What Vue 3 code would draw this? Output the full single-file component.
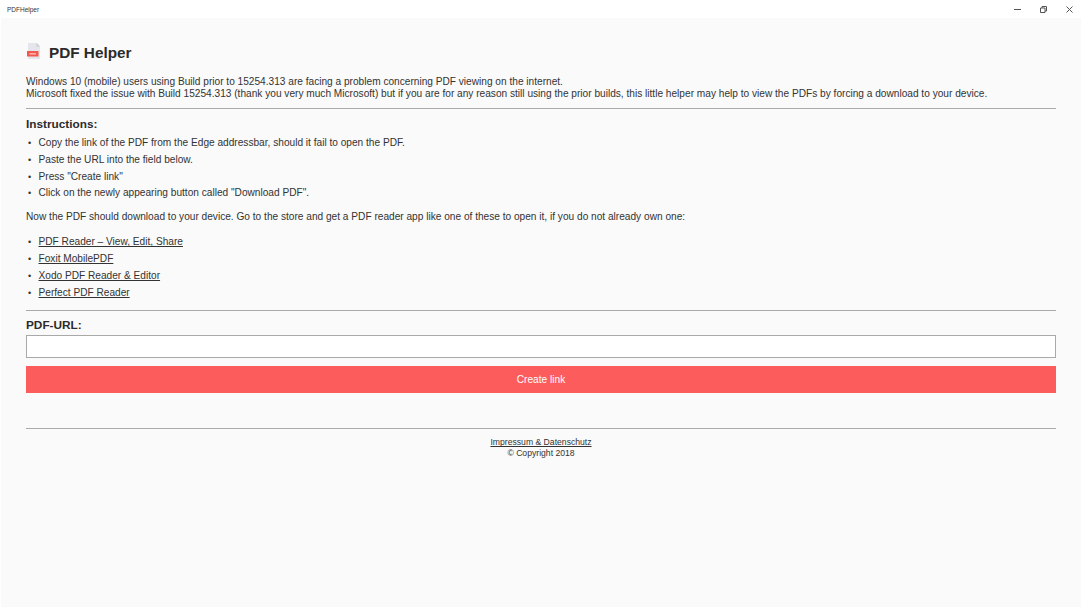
<template>
  <div class="app">
    <header class="titlebar">
      <span class="titlebar__name">PDFHelper</span>
      <div class="titlebar__controls">
        <svg width="7" height="7" viewBox="0 0 7 7"><path d="M0 3.500h7" stroke="#555" fill="none" /></svg>
        <svg width="7" height="7" viewBox="0 0 7 7"><path d="M.5 2h4.500v4.500h-4.500zM2 2v-1.500h4.500v4.500h-1.500" stroke="#555" fill="none" /></svg>
        <svg width="7" height="7" viewBox="0 0 7 7"><path d="M.5.5l6 6M6.500.5l-6 6" stroke="#555" fill="none" /></svg>
      </div>
    </header>

    <main class="page">
      <div class="heading">
        <svg class="heading__icon" width="16" height="16" viewBox="0 0 16 16">
          <path d="M2 0h8.500l3.500 3.500V16H2z" fill="#e4e6eb" />
          <path d="M10.500 0L14 3.500h-3.500z" fill="#c8cbd2" />
          <rect x="1" y="8" width="11.500" height="5.500" fill="#f4574b" />
          <rect x="3.500" y="10.200" width="6.500" height="1.300" fill="#fbc9c4" />
        </svg>
        <h1 class="heading__title">PDF Helper</h1>
      </div>

      <p class="intro">
        Windows 10 (mobile) users using Build prior to 15254.313 are facing a problem concerning PDF viewing on the internet.<br />
        Microsoft fixed the issue with Build 15254.313 (thank you very much Microsoft) but if you are for any reason still using the prior builds, this little helper may help to view the PDFs by forcing a download to your device.
      </p>

      <hr class="rule rule--first" />

      <h2 class="subtitle">Instructions:</h2>
      <ul class="list list--steps">
        <li v-for="step in steps" :key="step">{{ step }}</li>
      </ul>

      <p class="after">Now the PDF should download to your device. Go to the store and get a PDF reader app like one of these to open it, if you do not already own one:</p>

      <ul class="list">
        <li v-for="app in apps" :key="app"><a href="#" class="link">{{ app }}</a></li>
      </ul>

      <hr class="rule rule--second" />

      <label class="field">
        <span class="subtitle subtitle--url">PDF-URL:</span>
        <input class="field__input" type="text" />
      </label>
      <button class="create" type="button">Create link</button>

      <hr class="rule rule--third" />

      <footer class="footer">
        <a href="#" class="link">Impressum &amp; Datenschutz</a>
        <span>© Copyright 2018</span>
      </footer>
    </main>
  </div>
</template>

<script setup>
const steps = [
  'Copy the link of the PDF from the Edge addressbar, should it fail to open the PDF.',
  'Paste the URL into the field below.',
  'Press "Create link"',
  'Click on the newly appearing button called "Download PDF".',
]

const apps = [
  'PDF Reader – View, Edit, Share',
  'Foxit MobilePDF',
  'Xodo PDF Reader & Editor',
  'Perfect PDF Reader',
]
</script>

<style scoped>
.app {
  height: 608px;
  display: flex;
  flex-direction: column;
  background: #fff;
  color: #333;
  font-family: "Liberation Sans", Arial, sans-serif;
  font-size: 10.15px;
  overflow: hidden;
}

.titlebar {
  height: 18px;
  flex: none;
  display: flex;
  align-items: center;
  justify-content: space-between;
  padding: 0 9px 0 7px;
  font-size: 6.5px;
  color: #333;
}

.titlebar__controls {
  display: flex;
  gap: 19px;
}

.page {
  flex: 1;
  margin: 0 1px 1px;
  padding: 0 25px;
  background: #fafafa;
}

.heading {
  display: flex;
  align-items: center;
  gap: 7px;
  height: 24px;
  margin-top: 23px;
}

.heading__icon {
  flex: none;
  align-self: flex-start;
  margin-top: 2px;
}

.heading__title {
  margin: 0;
  font-size: 15.3px;
  font-weight: 700;
  color: #2b2b2b;
}

.intro {
  margin: 11px 0 0;
  line-height: 12px;
}

.rule {
  height: 1px;
  margin: 0;
  border: 0;
  background: #a9a9a9;
}

.rule--first {
  margin-top: 8px;
}

.rule--second {
  margin-top: 9px;
}

.rule--third {
  margin-top: 35px;
}

.subtitle {
  margin: 8px 0 0;
  font-size: 11.8px;
  line-height: 14px;
  font-weight: 700;
  color: #2b2b2b;
}

.subtitle--url {
  display: block;
  margin-top: 7px;
}

.list {
  margin: 0;
  padding: 0;
  list-style: none;
}

.list--steps {
  margin-top: 4px;
}

.list li {
  position: relative;
  height: 16.8px;
  padding-left: 12.5px;
  line-height: 16.8px;
}

.list li::before {
  content: "•";
  position: absolute;
  left: 2px;
  font-size: 9px;
}

.after {
  margin: 8px 0 10px;
  line-height: 14px;
}

.link {
  color: #333;
  text-decoration: underline;
}

.field {
  display: block;
}

.field__input {
  display: block;
  box-sizing: border-box;
  width: 100%;
  height: 23px;
  margin-top: 3px;
  border: 1px solid #a9a9a9;
  background: #fff;
  outline: none;
}

.create {
  display: block;
  width: 100%;
  height: 27px;
  margin-top: 8px;
  border: 0;
  background: #fc5c5c;
  color: #fff;
  font-family: inherit;
  font-size: 10.15px;
}

.footer {
  display: flex;
  flex-direction: column;
  align-items: center;
  margin-top: 8px;
  font-size: 8.65px;
  line-height: 11px;
}
</style>

<style>
html,
body {
  margin: 0;
  background: #fff;
}
</style>
